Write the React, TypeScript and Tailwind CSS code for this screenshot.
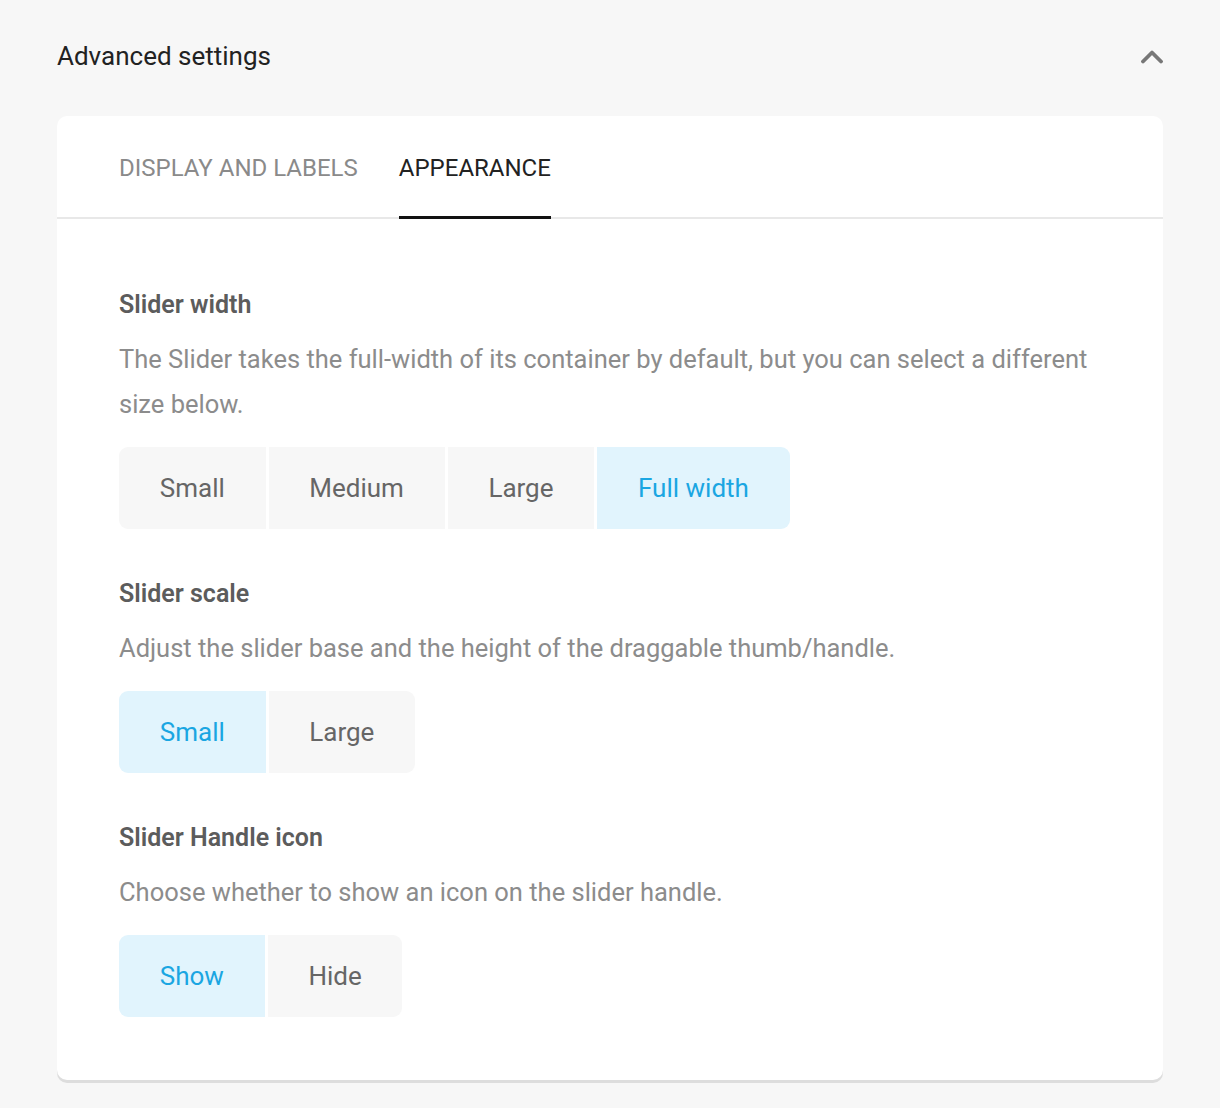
import { useState } from "react";

type Option = { label: string; value: string };

function Segmented({
  options,
  value,
  onChange,
}: {
  options: Option[];
  value: string;
  onChange: (v: string) => void;
}) {
  return (
    <div className="flex gap-[3px]">
      {options.map((o, i) => {
        const active = o.value === value;
        return (
          <button
            key={o.value}
            onClick={() => onChange(o.value)}
            className={[
              "h-[82px] px-[40.75px] text-[26px] leading-none",
              i === 0 ? "rounded-l-[9px]" : "",
              i === options.length - 1 ? "rounded-r-[9px]" : "",
              active
                ? "bg-[#e1f4fd] text-[#1aa6e2]"
                : "bg-[#f7f7f7] text-[#666666]",
            ].join(" ")}
          >
            {o.label}
          </button>
        );
      })}
    </div>
  );
}

function Section({
  title,
  description,
  children,
}: {
  title: string;
  description: string;
  children: React.ReactNode;
}) {
  return (
    <div className="flex flex-col">
      <h3 className="text-[25px] font-semibold leading-[36px] text-[#5c5c5c]">
        {title}
      </h3>
      <p className="mt-[14px] text-[25.5px] leading-[45px] text-[#8c8c8c]">
        {description}
      </p>
      <div className="mt-[20px]">{children}</div>
    </div>
  );
}

export default function App() {
  const [tab, setTab] = useState("appearance");
  const [width, setWidth] = useState("full");
  const [scale, setScale] = useState("small");
  const [icon, setIcon] = useState("show");

  const tabs = [
    { label: "DISPLAY AND LABELS", value: "display" },
    { label: "APPEARANCE", value: "appearance" },
  ];

  return (
    <div className="min-h-[1108px] bg-[#f7f7f7] px-[57px] pb-[26px] font-['Roboto',sans-serif]">
      <div className="flex h-[116px] items-start justify-between pt-[38px]">
        <h2 className="text-[26px] leading-[36px] text-[#222222]">
          Advanced settings
        </h2>
        <svg
          width="22"
          height="14"
          viewBox="0 0 22 14"
          className="mt-[12px]"
          fill="none"
        >
          <polyline
            points="2,11.5 11,2.5 20,11.5"
            stroke="#777777"
            strokeWidth="3.8"
            strokeLinecap="round"
            strokeLinejoin="round"
          />
        </svg>
      </div>

      <div className="rounded-[10px] bg-white shadow-[0_3px_0_#dddddd]">
        <div className="flex gap-[41px] border-b-2 border-[#e8e8e8] px-[62px]">
          {tabs.map((t) => {
            const active = t.value === tab;
            return (
              <button
                key={t.value}
                onClick={() => setTab(t.value)}
                className={[
                  "-mb-[2px] h-[103px] border-b-[3px] pt-[3px] text-[24px] leading-none",
                  active
                    ? "border-[#111111] text-[#222222]"
                    : "border-transparent text-[#8a8a8a]",
                ].join(" ")}
              >
                {t.label}
              </button>
            );
          })}
        </div>

        <div className="flex flex-col gap-[47px] px-[62px] pb-[63px] pt-[68px]">
          <Section
            title="Slider width"
            description="The Slider takes the full-width of its container by default, but you can select a different size below."
          >
            <Segmented
              value={width}
              onChange={setWidth}
              options={[
                { label: "Small", value: "small" },
                { label: "Medium", value: "medium" },
                { label: "Large", value: "large" },
                { label: "Full width", value: "full" },
              ]}
            />
          </Section>
          <Section
            title="Slider scale"
            description="Adjust the slider base and the height of the draggable thumb/handle."
          >
            <Segmented
              value={scale}
              onChange={setScale}
              options={[
                { label: "Small", value: "small" },
                { label: "Large", value: "large" },
              ]}
            />
          </Section>
          <Section
            title="Slider Handle icon"
            description="Choose whether to show an icon on the slider handle."
          >
            <Segmented
              value={icon}
              onChange={setIcon}
              options={[
                { label: "Show", value: "show" },
                { label: "Hide", value: "hide" },
              ]}
            />
          </Section>
        </div>
      </div>
    </div>
  );
}
